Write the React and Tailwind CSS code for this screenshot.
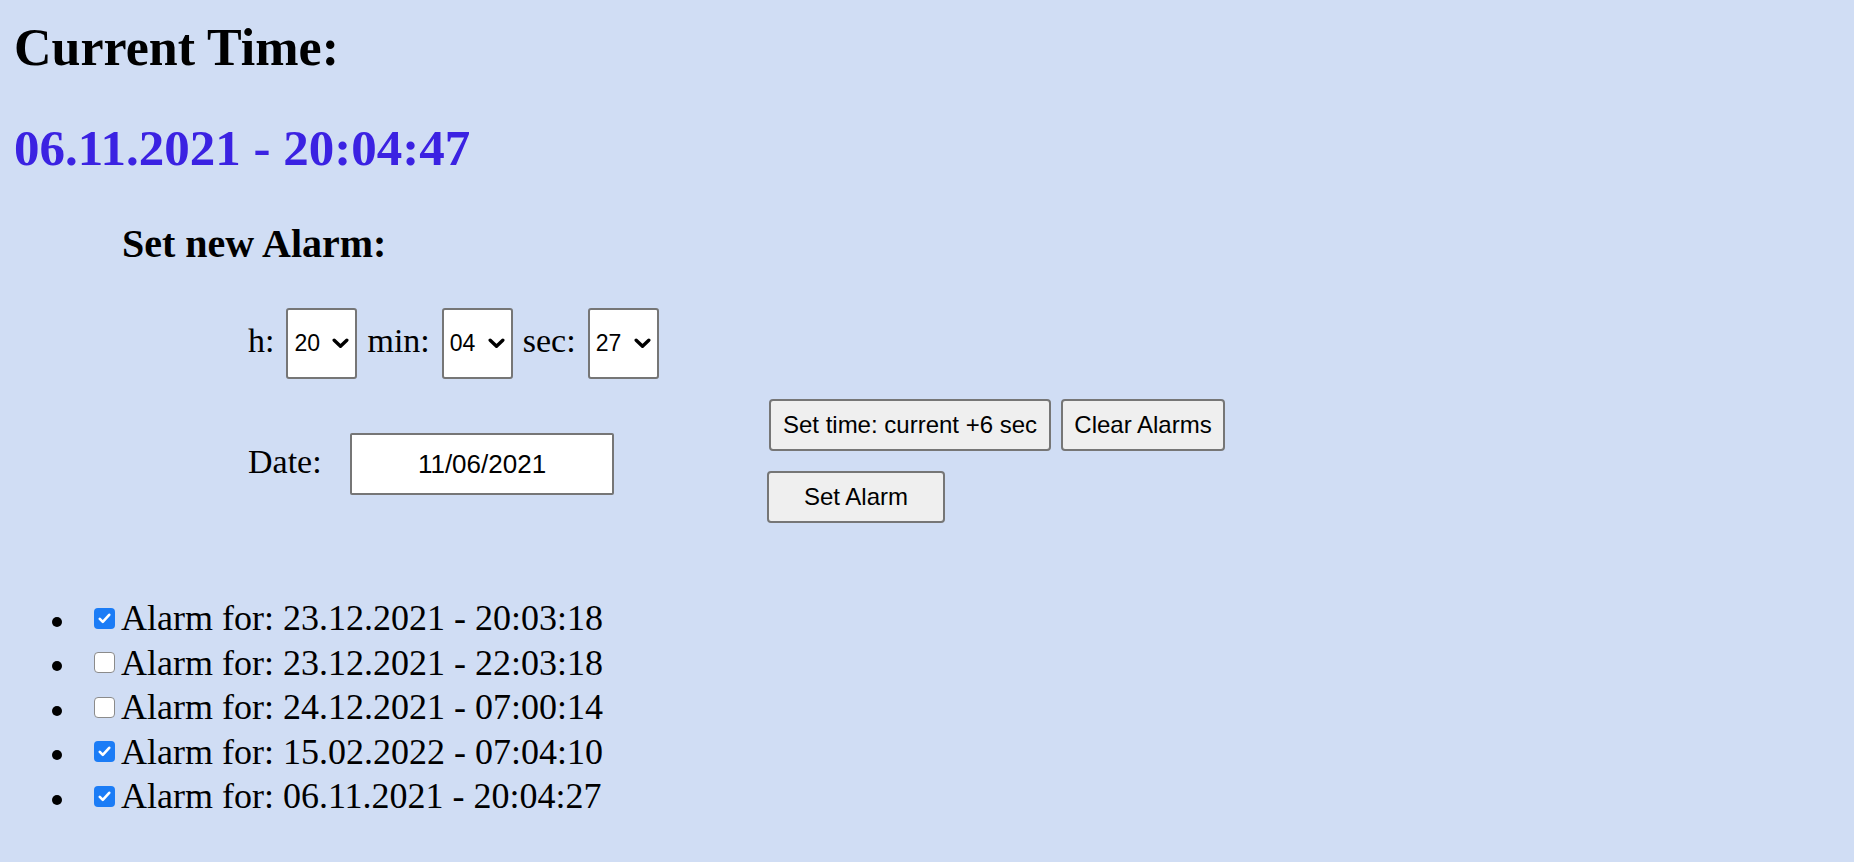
import React, { useState } from 'react';

const hours = Array.from({ length: 24 }, (_, i) => String(i).padStart(2, '0'));
const sixty = Array.from({ length: 60 }, (_, i) => String(i).padStart(2, '0'));

const initialAlarms = [
  { id: 1, label: '23.12.2021 - 20:03:18', active: true },
  { id: 2, label: '23.12.2021 - 22:03:18', active: false },
  { id: 3, label: '24.12.2021 - 07:00:14', active: false },
  { id: 4, label: '15.02.2022 - 07:04:10', active: true },
  { id: 5, label: '06.11.2021 - 20:04:27', active: true },
];

const TimeSelect = ({ value, options, onChange }) => (
  <div className="relative w-[71px] h-[71px]">
    <select
      value={value}
      onChange={(e) => onChange(e.target.value)}
      className="appearance-none w-full h-full bg-white border-2 border-[#767676] rounded-[3px] pl-[6px] text-[23px] text-black outline-none"
      style={{ fontFamily: '"Liberation Sans", Arial, sans-serif' }}
    >
      {options.map((o) => (
        <option key={o} value={o}>
          {o}
        </option>
      ))}
    </select>
    {/* chevron */}
    <svg
      className="absolute left-[46px] top-[30px] pointer-events-none"
      width="17"
      height="11"
      viewBox="0 0 17 11"
      fill="none"
    >
      <path d="M2.2 2.2 L8.5 8.2 L14.8 2.2" stroke="#000" strokeWidth="3.4" strokeLinecap="round" strokeLinejoin="round" />
    </svg>
  </div>
);

const Checkbox = ({ checked, onToggle }) =>
  checked ? (
    <button
      onClick={onToggle}
      className="w-[21px] h-[21px] rounded-[4px] bg-[#1b7cf6] flex items-center justify-center shrink-0"
    >
      <svg width="13" height="11" viewBox="0 0 13 11" fill="none">
        <path d="M1.8 5.8 L4.8 8.8 L11.2 1.8" stroke="#fff" strokeWidth="2.6" strokeLinecap="round" strokeLinejoin="round" />
      </svg>
    </button>
  ) : (
    <button
      onClick={onToggle}
      className="w-[21px] h-[21px] rounded-[4px] bg-white border-[1.5px] border-[#8b8b8b] shrink-0"
    />
  );

const Button = ({ children, className, onClick }) => (
  <button
    onClick={onClick}
    className={`h-[52px] bg-[#efefef] border-2 border-[#767676] rounded-[4px] text-[24px] text-black leading-none ${className}`}
    style={{ fontFamily: '"Liberation Sans", Arial, sans-serif' }}
  >
    {children}
  </button>
);

export default function App() {
  const [h, setH] = useState('20');
  const [m, setM] = useState('04');
  const [s, setS] = useState('27');
  const [alarms, setAlarms] = useState(initialAlarms);

  const toggle = (id) =>
    setAlarms((list) => list.map((a) => (a.id === id ? { ...a, active: !a.active } : a)));

  return (
    <div
      className="min-h-screen w-full bg-[#d0ddf4] text-black pt-[22px] pb-[40px]"
      style={{ fontFamily: '"Liberation Serif", "Times New Roman", serif' }}
    >
      <h1 className="pl-[14px] text-[52px] leading-[52px] font-bold mb-[49px]">Current Time:</h1>
      <div className="pl-[14px] text-[51px] leading-[51px] font-bold text-[#3b22e2] mb-[50px]">
        06.11.2021 - 20:04:47
      </div>

      <h2 className="pl-[122px] text-[40px] leading-[40px] font-bold mb-[44px]">Set new Alarm:</h2>

      {/* Alarm form */}
      <div className="flex items-start pl-[248px]">
        <div className="w-[519px] flex flex-col">
          <div className="flex items-center">
            <span className="text-[34px] leading-[34px] mb-[6px] mr-[12px]">h:</span>
            <TimeSelect value={h} options={hours} onChange={setH} />
            <span className="text-[34px] leading-[34px] mb-[6px] ml-[10px] mr-[12px]">min:</span>
            <TimeSelect value={m} options={sixty} onChange={setM} />
            <span className="text-[34px] leading-[34px] mb-[6px] ml-[10px] mr-[12px]">sec:</span>
            <TimeSelect value={s} options={sixty} onChange={setS} />
          </div>

          <div className="flex items-center mt-[54px]">
            <span className="w-[102px] text-[34px] leading-[34px] mb-[5px]">Date:</span>
            <input
              type="text"
              readOnly
              value="11/06/2021"
              className="w-[264px] h-[62px] bg-white border-2 border-[#767676] rounded-[2px] text-center text-[26px] text-black outline-none"
              style={{ fontFamily: '"Liberation Sans", Arial, sans-serif' }}
            />
          </div>
        </div>

        <div className="flex flex-col mt-[91px]">
          <div className="flex gap-[10px] ml-[2px]">
            <Button className="w-[282px]">Set time: current +6 sec</Button>
            <Button className="w-[164px]" onClick={() => setAlarms([])}>
              Clear Alarms
            </Button>
          </div>
          <div className="mt-[20px]">
            <Button className="w-[178px]">Set Alarm</Button>
          </div>
        </div>
      </div>

      {/* Alarm list */}
      <ul className="mt-[73px]">
        {alarms.map((a) => (
          <li key={a.id} className="flex items-center pl-[52px] h-[44.5px] text-[36px] leading-[44.5px]">
            <span className="w-[10px] h-[10px] rounded-full bg-black mt-[7px] shrink-0" />
            <span className="ml-[32px] flex">
              <Checkbox checked={a.active} onToggle={() => toggle(a.id)} />
            </span>
            <span className="ml-[6px] whitespace-nowrap">Alarm for: {a.label}</span>
          </li>
        ))}
      </ul>
    </div>
  );
}
